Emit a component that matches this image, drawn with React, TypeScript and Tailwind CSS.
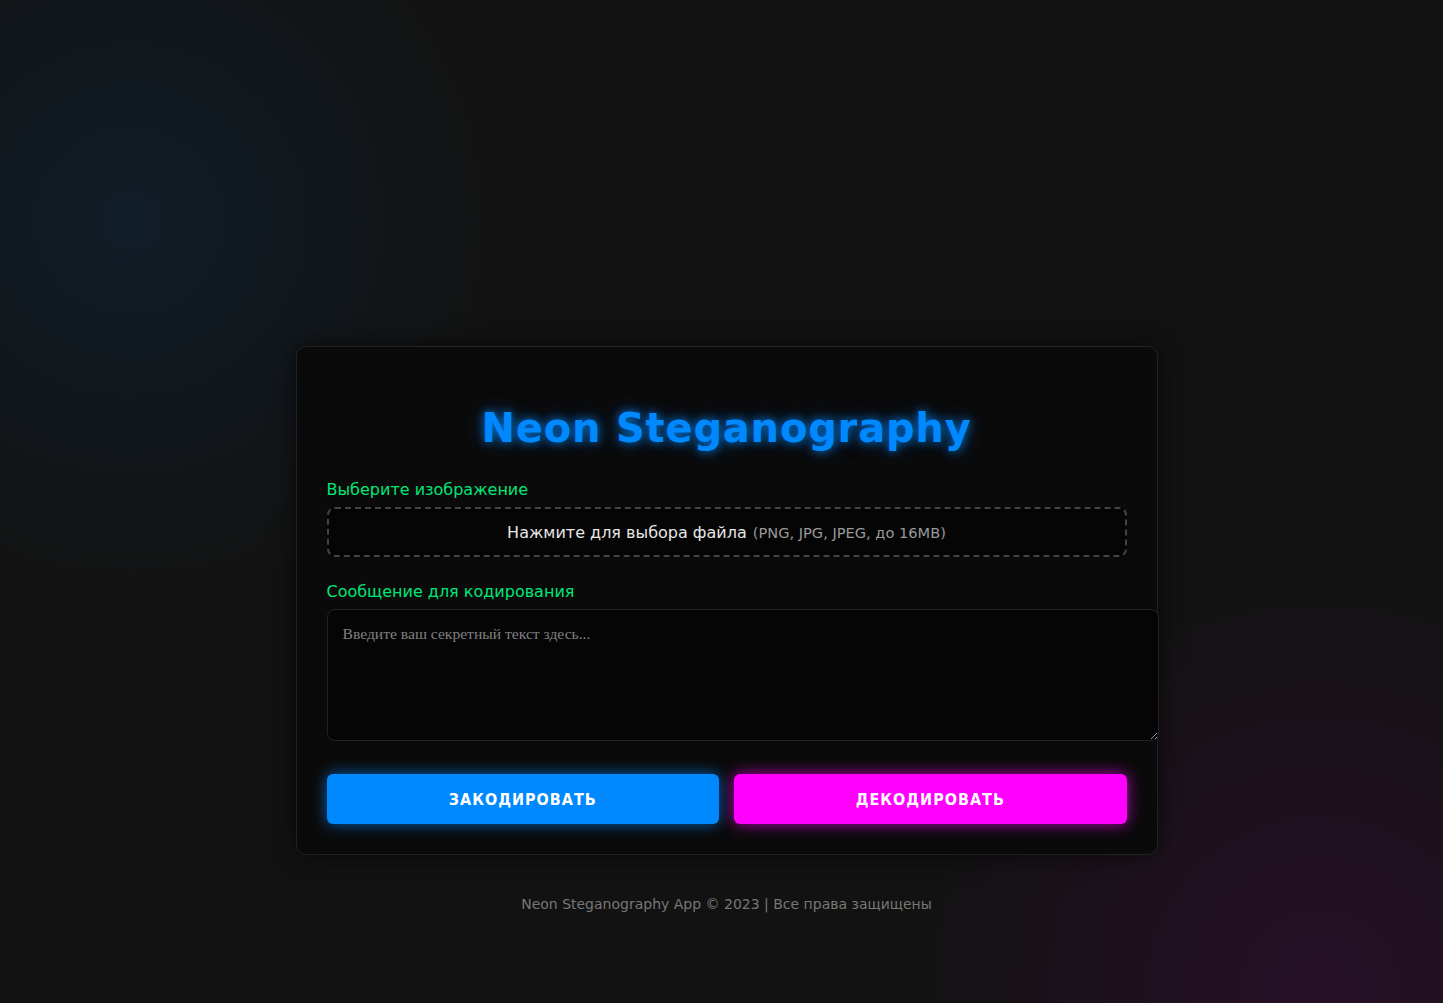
import React from 'react';

const sans = "font-['DejaVu_Sans',Verdana,sans-serif]";

export default function App() {
  return (
    <div
      className={`min-h-screen bg-[#121212] leading-[normal] ${sans} bg-[radial-gradient(circle_380px_at_130px_220px,rgba(0,136,255,0.09),transparent),radial-gradient(circle_420px_at_1320px_990px,rgba(255,0,255,0.09),transparent)]`}
    >
      <div className="pl-[10px] pt-[346px] pb-[80px]">
        <div className="mx-auto w-[862px]">
          <div className="rounded-[10px] border border-[#222] bg-[#0a0a0a] p-[30px] shadow-[0_0_25px_rgba(0,0,0,0.6)]">
            <h1 className="mt-[28px] mb-[29px] text-center text-[40px] font-bold tracking-[0.8px] text-[#0088ff] [text-shadow:0_0_10px_rgba(0,136,255,0.8),0_0_20px_rgba(0,136,255,0.4)]">
              Neon Steganography
            </h1>

            <div className="mb-[25px]">
              <label className="mb-[8px] block text-[16px] text-[#00e676]">Выберите изображение</label>
              <div className="flex h-[50px] cursor-pointer items-center justify-center rounded-[8px] border-2 border-dashed border-[#444] bg-[#050505] text-[16px] text-[#e6e6e6]">
                <span>Нажмите для выбора файла</span>
                <span className="ml-[6px] text-[14.6px] text-[#999]">(PNG, JPG, JPEG, до 16MB)</span>
              </div>
            </div>

            <div className="mb-[25px]">
              <label className="mb-[8px] block text-[16px] text-[#00e676]">Сообщение для кодирования</label>
              <textarea
                placeholder="Введите ваш секретный текст здесь..."
                className="box-content block h-[100px] w-full resize-y rounded-[8px] border border-[#222] bg-[#050505] p-[15px] font-['Liberation_Serif',serif] text-[15.6px] leading-[normal] text-[#ddd] outline-none placeholder:text-[#808080]"
              />
            </div>

            <div className="mt-[33px] flex gap-[15px]">
              <button className="h-[50px] flex-1 rounded-[6px] bg-[#0088ff] text-[16px] font-bold font-stretch-condensed tracking-[1px] text-white shadow-[0_0_15px_rgba(0,136,255,0.7)]">
                ЗАКОДИРОВАТЬ
              </button>
              <button className="h-[50px] flex-1 rounded-[6px] bg-[#ff00ff] text-[16px] font-bold font-stretch-condensed tracking-[1px] text-white shadow-[0_0_15px_rgba(255,0,255,0.7)]">
                ДЕКОДИРОВАТЬ
              </button>
            </div>
          </div>

          <footer className="mt-[41px] text-center text-[14px] text-[#777]">
            Neon Steganography App © 2023 | Все права защищены
          </footer>
        </div>
      </div>
    </div>
  );
}
